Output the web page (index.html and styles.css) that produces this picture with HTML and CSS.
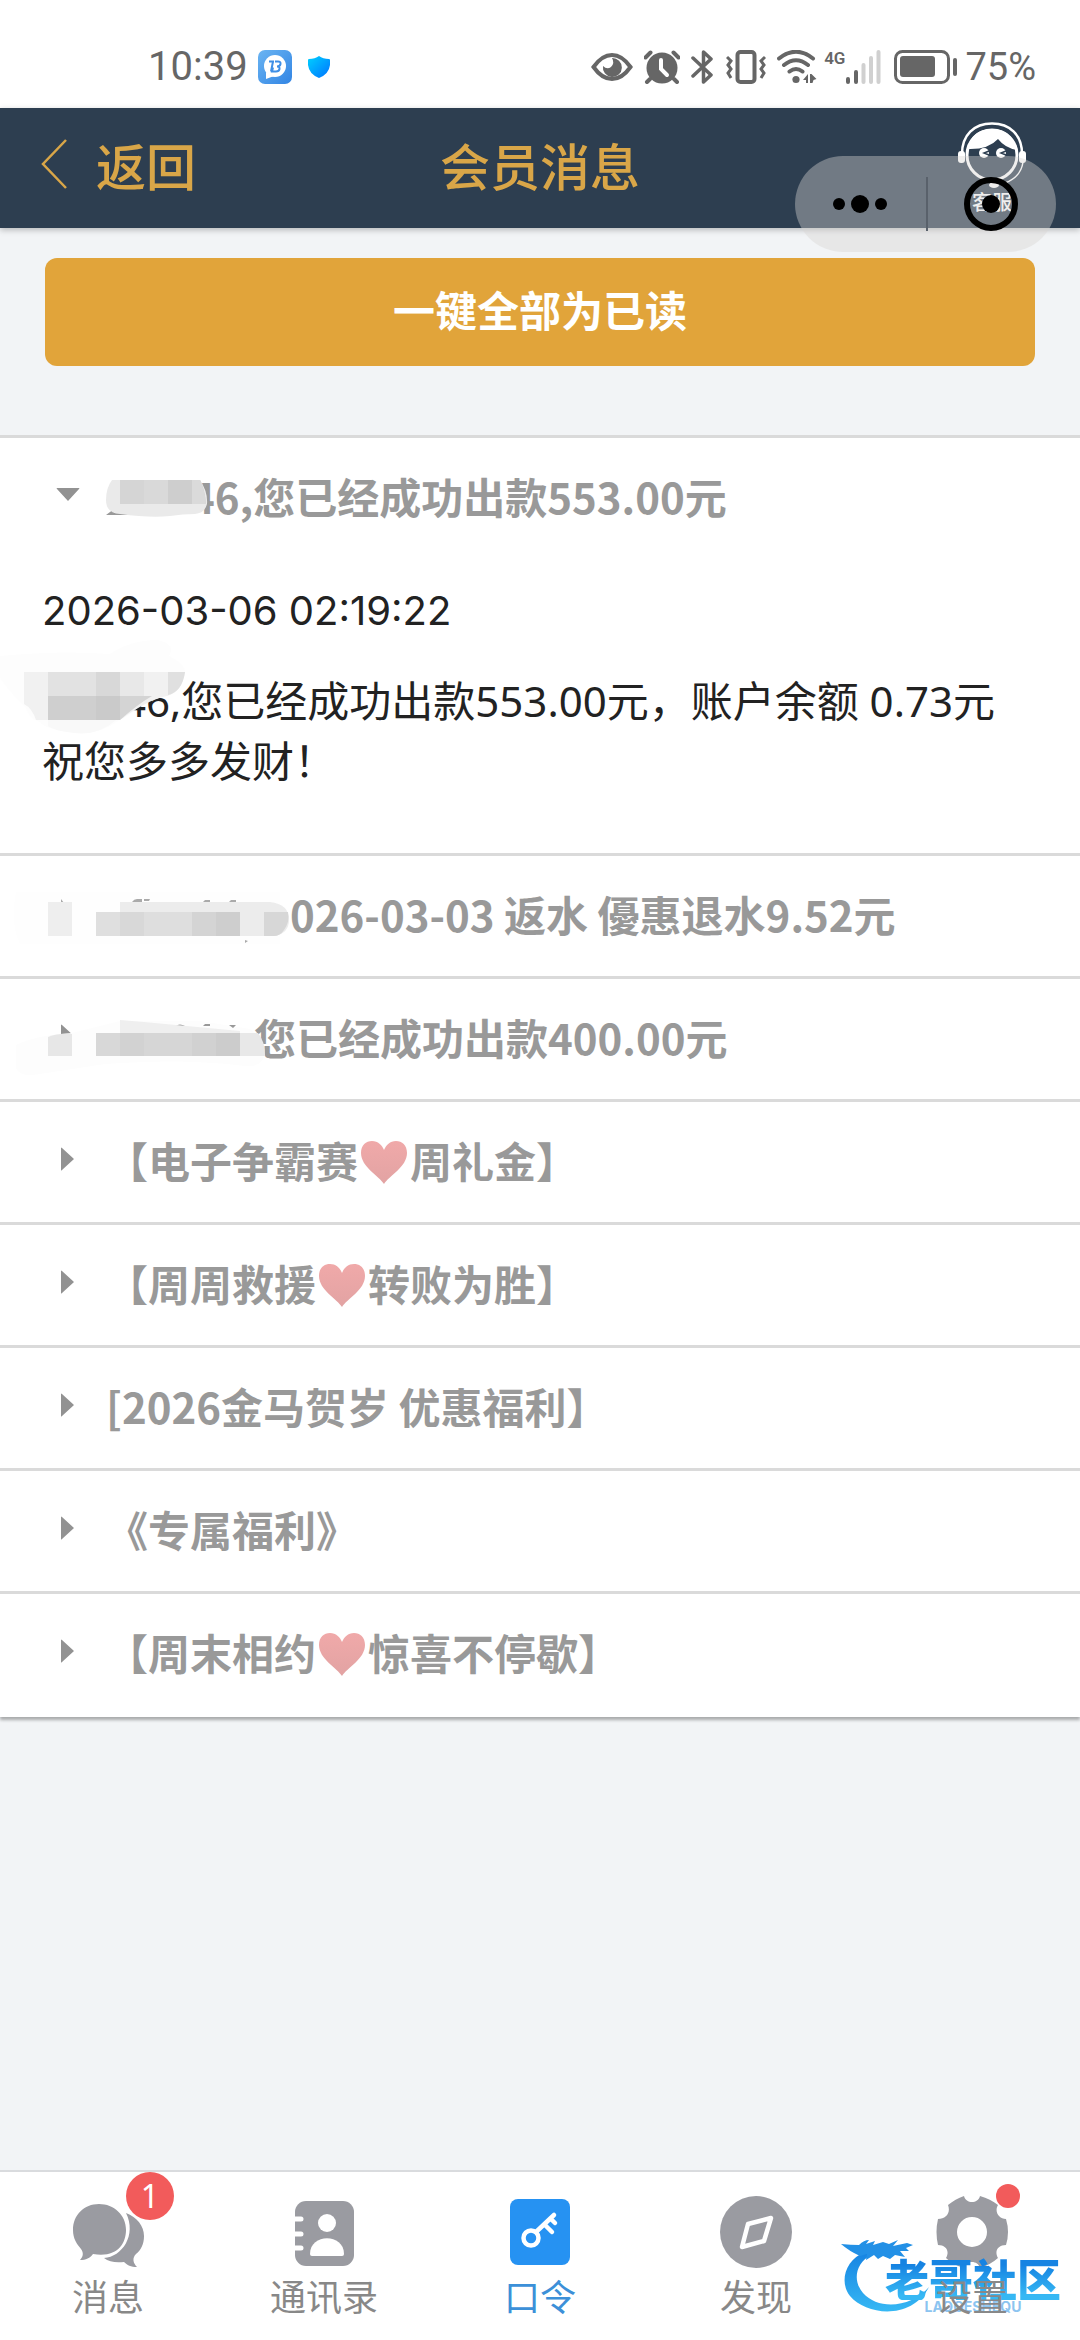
FILE: index.html
```html
<!DOCTYPE html>
<html lang="zh-CN">
<head>
<meta charset="utf-8">
<meta name="viewport" content="width=device-width, initial-scale=1">
<title>会员消息</title>
<link rel="stylesheet" href="styles.css">
</head>
<body>
<svg class="defs" aria-hidden="true">
  <defs>
    <linearGradient id="heartFill" x1="0" y1="0" x2="0" y2="1"><stop offset="0" stop-color="#f0a9a9"/><stop offset="1" stop-color="#e2a3a3"/></linearGradient>
    <linearGradient id="appFill" x1="0" y1="0" x2="1" y2="1"><stop offset="0" stop-color="#6ab4f2"/><stop offset="1" stop-color="#3285e4"/></linearGradient>
    <linearGradient id="shieldFill" x1="0" y1="0" x2="1" y2="1"><stop offset="0" stop-color="#00d2ff"/><stop offset="1" stop-color="#0072ff"/></linearGradient>
    <linearGradient id="dragonFill" x1="0" y1="0" x2="0" y2="1"><stop offset="0" stop-color="#1683e2"/><stop offset="1" stop-color="#36b8f4"/></linearGradient>
    <symbol id="heart" viewBox="0 0 52 48"><path d="M26 46C21 38 3 29 3 15 3 7 8 3 14 3c6 0 10 4 12 9 2-5 6-9 12-9 6 0 11 4 11 12 0 14-18 23-23 31z" fill="url(#heartFill)"/></symbol>
    <symbol id="arrow" viewBox="0 0 24 24"><path d="M5 1v22q0 1 1 0L18 12 6 1q-1-1-1 0z" fill="#929292"/></symbol>
  </defs>
</svg>

<div class="status">
  <div class="status-left">
    <span class="clock">10:39</span>
    <svg class="app-icon" width="34" height="34" viewBox="0 0 34 34"><rect width="34" height="34" rx="7" fill="url(#appFill)"/><circle cx="17" cy="16" r="11" fill="#fff"/><path d="M8 22l0 7 8-3z" fill="#fff"/><path d="M11 11.500h5M15 11.500l-2 10M17 11.500h3q3 0 2.500 2.500t-3.500 2.500q3 0 2.500 2.500t-3.500 2.500h-4l1-4" fill="none" stroke="#3f8fe6" stroke-width="2"/></svg>
    <svg width="22" height="22" viewBox="0 0 22 22"><path d="M11 0Q15 3 21 3q2 0 1 6-1 9-11 13Q1 18 0 9-1 3 1 3 7 3 11 0z" fill="url(#shieldFill)"/></svg>
  </div>
  <div class="status-right">
    <svg width="42" height="34" viewBox="0 0 42 34"><path d="M2.500 17Q11 5 21 5t18.500 12Q31 29 21 29T2.500 17z" fill="none" stroke="#666" stroke-width="4"/><path d="M21 8a9.500 9.500 0 1 1-9 8q4 4 8 1 4-4 1-9z" fill="#666"/></svg>
    <svg width="36" height="34" viewBox="0 0 36 34"><circle cx="18" cy="18" r="15.500" fill="#666"/><path d="M1.500 7.500l5-5M34.500 7.500l-5-5M6 29l-3 3M30 29l3 3" stroke="#666" stroke-width="4" stroke-linecap="round"/><path d="M17 10v9l6 6" fill="none" stroke="#fff" stroke-width="4" stroke-linecap="round"/></svg>
    <svg width="24" height="36" viewBox="0 0 24 36"><path d="M2 9l18 17-7.500 7V3L20 10 2 27" fill="none" stroke="#666" stroke-width="3.500" stroke-linejoin="round" stroke-linecap="round"/></svg>
    <svg width="40" height="34" viewBox="0 0 40 34"><rect x="11.500" y="2" width="17" height="30" rx="3" fill="none" stroke="#666" stroke-width="4"/><path d="M1 7l4 4-3 4 3 4-3 4 3 5M39 7l-4 4 3 4-3 4 3 4-3 5" fill="none" stroke="#666" stroke-width="3"/></svg>
    <svg width="40" height="34" viewBox="0 0 40 34"><path d="M2 8.500Q19-5 36 8.500M7 15q12-9.500 24 0M12.500 21.500q6.500-5 13 0" fill="none" stroke="#666" stroke-width="4" stroke-linecap="round"/><circle cx="19" cy="29.500" r="3.600" fill="#666"/><path d="M26 30l5-6v9h-2v-3zM33 24h1.500l5 5-3 1-1 3H33z" fill="#666"/></svg>
    <span class="cell"><span class="cell-type">4G</span><svg width="36" height="34" viewBox="0 0 36 34"><g stroke-width="4" stroke-linecap="round"><path d="M3 29v3M11 22v10" stroke="#666"/><path d="M18.500 15v17M26 8v24M33.500 2v30" stroke="#d0d0d0"/></g></svg></span>
    <svg width="64" height="34" viewBox="0 0 64 34"><rect x="1.500" y="1.500" width="53" height="31" rx="7" fill="none" stroke="#666" stroke-width="3"/><rect x="6" y="6" width="35" height="21" rx="3" fill="#666"/><rect x="59" y="8" width="4" height="18" rx="2" fill="#666"/></svg>
    <span class="percent">75%</span>
  </div>
</div>

<header class="header">
  <a class="back" href="#back"><svg width="28" height="52" viewBox="0 0 28 52"><path d="M25 2L2 26l23 24" fill="none" stroke="#d9a648" stroke-width="2.500"/></svg>返回</a>
  <h1 class="title">会员消息</h1>
  <a class="service" href="#service">
    <svg width="68" height="68" viewBox="0 0 68 68"><path d="M4 33C4 14 16 2.500 34 2.500S64 14 64 33" fill="none" stroke="#fff" stroke-width="2.500"/><circle cx="34" cy="34" r="25" fill="none" stroke="#fff" stroke-width="3"/><path d="M9 28Q14 8 34 8t25 21Q47 27 40 18q-10 11-31 10z" fill="#fff"/><rect x="0" y="30" width="7" height="12" rx="3" fill="#fff"/><rect x="61" y="30" width="7" height="12" rx="3" fill="#fff"/><circle cx="26" cy="32" r="5" fill="#fff"/><circle cx="43" cy="32" r="5" fill="#fff"/><path d="M31 30l-5 2 5 2M48 30l-5 2 5 2" fill="none" stroke="#2d3e50" stroke-width="1.500"/><path d="M65 41Q63 56 47 62" fill="none" stroke="#fff" stroke-width="1.500"/><ellipse cx="36" cy="64" rx="5" ry="3" fill="#fff"/></svg>
    <span>客服</span>
  </a>
  <div class="capsule">
    <button type="button" aria-label="更多"><svg width="56" height="20" viewBox="0 0 56 20"><circle cx="7" cy="10" r="6"/><circle cx="28" cy="10" r="9"/><circle cx="49" cy="10" r="6"/></svg></button>
    <button type="button" aria-label="关闭"><svg width="54" height="54" viewBox="0 0 54 54"><circle cx="27" cy="27" r="24" fill="none" stroke="#000" stroke-width="6"/><circle cx="27" cy="27" r="9"/></svg></button>
  </div>
</header>

<main class="main">
  <button class="read-all" type="button">一键全部为已读</button>

  <div class="messages">
    <details class="message" open>
      <summary><svg class="arrow open" width="24" height="24"><use href="#arrow"/></svg><span><i class="gap gap-a"></i>46,您已经成功出款553.00元</span>
        <svg class="mosaic" width="280" height="120" viewBox="0 0 280 120"><path d="M106 77l8-6v4h14v2z" fill="#999"/><path d="M112 42h88q8 12 7 24-2 9-12 10-12 0-25 2-20 2-50-2-14-1-14-14 0-12 6-20z" fill="#eaeaea"/><path d="M120 42h24v24h-24z" fill="#d5d5d5"/><path d="M144 42h24v24h-24z" fill="#d9d9d9"/><path d="M168 42h32q5 10 6 24h-38z" fill="#cecece"/><path d="M192 42h8q5 10 6 24h-14z" fill="#dadada"/></svg>
      </summary>
      <div class="body">
        <time>2026-03-06 02:19:22</time>
        <p><i class="gap gap-b"></i>46,您已经成功出款553.00元，账户余额 <span>0.73元</span><br>祝您多多发财！</p>
        <svg class="mosaic" width="280" height="200" viewBox="0 0 280 200"><path d="M0 98q60-6 110-2 20-14 48-14 18 4 11 16 16 8 16 17-5 18-18 23-18 3-30 12-10 10-18 12-20 16-45 12-28-2-34-10-10-2-14-14Q10 134 0 120z" fill="#fdfdfd"/><path d="M24 114h161q-3 20-18 24-18 3-47 24H36q-4-12-12-16z" fill="#f1f1f1"/><path d="M48 114h48v24H48z" fill="#e2e2e2"/><path d="M96 114h24v24H96z" fill="#d8d8d8"/><path d="M120 114h24v24h-24z" fill="#e8e8e8"/><path d="M168 114h17q-3 20-17 23z" fill="#e0e0e0"/><path d="M48 138h48v24H48z" fill="#cfcfcf"/><path d="M96 138h24v24H96z" fill="#cacaca"/><path d="M120 138h32q-14 8-32 24z" fill="#d4d4d4"/><path d="M48 162h68q-18 16-42 13-20-2-26-7z" fill="#f9f9f9"/></svg>
      </div>
    </details>
    <details class="message">
      <summary><svg class="arrow" width="24" height="24"><use href="#arrow"/></svg><span><i class="gap gap-c"></i>026-03-03 返水 優惠退水9.52元</span>
        <svg class="mosaic" width="320" height="120" viewBox="0 0 320 120"><path d="M16 36h264v52H20q-10-20-4-52z" fill="#fefefe"/><path d="M61 47v-4l3 4zM132 46q2-3 5-3h5v3zM144 43h6l-1 2h-5zM203 46l2-2h5v2zM229 46l2-2h5v2zM245 84l3 1-3 2z" fill="#aaa"/><path d="M48 46h24v34H48z" fill="#eeeeee"/><path d="M96 56h24v24H96z" fill="#dfdfdf"/><path d="M120 46h150q19 2 19 18 0 13-14 16H120z" fill="#ececec"/><path d="M120 56h24v24h-24z" fill="#d8d8d8"/><path d="M144 56h48v24h-48z" fill="#dedede"/><path d="M192 56h24v24h-24z" fill="#d4d4d4"/><path d="M216 56h24v24h-24z" fill="#cecece"/><path d="M264 56h24q2 10-4 18-4 6-10 6h-10z" fill="#d7d7d7"/></svg>
      </summary>
    </details>
    <details class="message">
      <summary><svg class="arrow" width="24" height="24"><use href="#arrow"/></svg><span><i class="gap gap-d"></i>您已经成功出款400.00元</span>
        <svg class="mosaic" width="320" height="120" viewBox="0 0 320 120"><path d="M16 66q20-10 56-12l48-12h80l50 8q18 14 13 30-4 8-18 7-60-8-140-2l-65 10q-20 4-24-6z" fill="#fdfdfd"/><path d="M175 47q5-3 10 0zM203 47l2-2h5v2zM229 46h7l-3 3z" fill="#999"/><path d="M48 58q10-4 24-3v22H48z" fill="#e7e7e7"/><path d="M96 54h24v23H96z" fill="#d8d8d8"/><path d="M120 41l24 2 96 9v25H120z" fill="#efefef"/><path d="M120 54h24v23h-24z" fill="#d2d2d2"/><path d="M144 54h48v23h-48z" fill="#d6d6d6"/><path d="M192 54h24v23h-24z" fill="#d1d1d1"/><path d="M216 54h24v23h-24z" fill="#cccccc"/><path d="M240 54h18q7 8 7 23h-25z" fill="#e8e8e8"/></svg>
      </summary>
    </details>
    <details class="message"><summary><svg class="arrow" width="24" height="24"><use href="#arrow"/></svg><span>【电子争霸赛<svg class="heart" width="52" height="48"><use href="#heart"/></svg>周礼金】</span></summary></details>
    <details class="message"><summary><svg class="arrow" width="24" height="24"><use href="#arrow"/></svg><span>【周周救援<svg class="heart" width="52" height="48"><use href="#heart"/></svg>转败为胜】</span></summary></details>
    <details class="message"><summary><svg class="arrow" width="24" height="24"><use href="#arrow"/></svg><span>[2026金马贺岁 优惠福利】</span></summary></details>
    <details class="message"><summary><svg class="arrow" width="24" height="24"><use href="#arrow"/></svg><span>《专属福利》</span></summary></details>
    <details class="message"><summary><svg class="arrow" width="24" height="24"><use href="#arrow"/></svg><span>【周末相约<svg class="heart" width="52" height="48"><use href="#heart"/></svg>惊喜不停歇】</span></summary></details>
  </div>
</main>

<nav class="tabs">
  <a class="tab" href="#messages">
    <span class="icon"><svg width="72" height="72" viewBox="0 0 72 72"><path d="M27 8C12 8 1 19 1 34c0 9 4 14 8 19 3 4 2 8-1 11 6 0 10-2 13-6 24 4 33-10 33-24C54 19 42 8 27 8z" fill="#9a9ba1"/><path d="M54 17c11 4 18 13 18 23 0 8-3 14-8 18-4 4-3 9 1 13-6 0-10-2-13-5-8 1-15 0-20-4 18-1 33-23 22-45z" fill="#9a9ba1"/></svg><b class="badge">1</b></span>
    <span class="label">消息</span>
  </a>
  <a class="tab" href="#contacts">
    <span class="icon"><svg width="72" height="72" viewBox="0 0 72 72"><rect x="7" y="5" width="59" height="65" rx="11" fill="#9a9ba1"/><path d="M6 23h7M6 38h7M6 52h7" stroke="#fff" stroke-width="5" stroke-linecap="round"/><ellipse cx="39" cy="27" rx="9" ry="9" fill="#fff"/><path d="M22 58C22 37 56 37 56 58q0 2-2 2H24q-2 0-2-2z" fill="#fff"/></svg></span>
    <span class="label">通讯录</span>
  </a>
  <a class="tab active" href="#token" aria-current="page">
    <span class="icon"><svg width="72" height="72" viewBox="0 0 72 72"><rect x="6" y="3" width="60" height="66" rx="8" fill="#2692f2"/><circle cx="27" cy="42" r="7.500" fill="none" stroke="#fff" stroke-width="4.500"/><path d="M32 36l18-17M41 29l7 7M47 23l4 4" fill="none" stroke="#fff" stroke-width="4.500" stroke-linecap="round"/></svg></span>
    <span class="label">口令</span>
  </a>
  <a class="tab" href="#discover">
    <span class="icon"><svg width="72" height="72" viewBox="0 0 72 72"><circle cx="36" cy="36" r="36" fill="#9a9ba1"/><path d="M28 28l23-6-7 23-22 6z" fill="none" stroke="#fff" stroke-width="4.500" stroke-linejoin="round"/></svg></span>
    <span class="label">发现</span>
  </a>
  <a class="tab" href="#settings">
    <span class="icon"><svg width="72" height="72" viewBox="0 0 72 72"><path fill-rule="evenodd" d="M28 0c2 8 14 8 16 0 7 2 13 5 18 9-4 7 1 14 8 14q4 13 0 26c-8 0-12 6-8 13q-8 7-18 10c-2-8-14-8-16 0q-11-3-18-10c4-7 0-13-8-13q-3-13 0-26c8 0 13-6 10-14 5-4 10-7 16-9zM36 21a15 15 0 1 0 0 30 15 15 0 0 0 0-30z" fill="#9a9ba1"/></svg><b class="dot"></b></span>
    <span class="label">设置</span>
    <span class="watermark" aria-hidden="true">
      <svg width="90" height="80" viewBox="0 0 90 80"><path d="M24 14C4 22-2 44 9 58c17 20 62 24 79-9-17 20-50 24-66 6C11 42 15 25 30 17z" fill="url(#dragonFill)"/><path d="M0 6q10 1 18 1 5-5 10-5l-3 4 9-3-2 4 10-3 6 2 9-4-5 6 14-3 6 2-7 3 3 3-9 0 5 6-10-2-5 4-7-3-5 3-4-4-8 5 1-6-7 2Q8 13 0 6z" fill="#2290e6"/></svg>
      <span class="brand"><strong>老哥社区</strong><small>LAOGESHEQU</small></span>
    </span>
  </a>
</nav>
</body>
</html>
```
FILE: styles.css
```css
* { box-sizing: border-box; }

body {
  margin: 0;
  min-height: 100vh;
  display: flex;
  flex-direction: column;
  background: #f2f4f6;
  color: #222;
  font-family: "Noto Sans CJK SC", sans-serif;
  font-size: 42px;
  line-height: 60px;
}

svg { display: block; flex: none; }
a { color: inherit; text-decoration: none; }
button { padding: 0; border: 0; background: none; font: inherit; }
.defs { position: absolute; width: 0; height: 0; }

/* Status bar */
.status {
  height: 108px;
  padding: 26px 44px 0 148px;
  display: flex;
  justify-content: space-between;
  align-items: center;
  background: #fff;
  color: #666;
  font-family: Roboto, sans-serif;
  line-height: 48px;
}
.status-left, .status-right { display: flex; align-items: center; }
.clock { font-size: 40px; }
.app-icon { margin: 0 16px 0 10px; }
.status-right { gap: 11px; }
.cell { display: flex; margin: 0 2px 0 -4px; }
.cell-type { font-size: 17px; line-height: 16px; font-weight: 600; }
.percent { margin-left: -4px; font-size: 38px; }

/* Header */
.header {
  position: relative;
  z-index: 1;
  height: 120px;
  padding: 0 54px 0 41px;
  display: grid;
  grid-template-columns: 1fr auto 1fr;
  align-items: center;
  background: #2d3e50;
  color: #d9a648;
  font-size: 50px;
  font-weight: 500;
  box-shadow: 0 2px 6px rgba(0, 0, 0, .25);
}
.back { display: flex; align-items: center; gap: 27px; padding-bottom: 8px; }
.title { margin: 0; padding: 0 0 8px 13px; font-size: 50px; font-weight: 500; }
.service {
  justify-self: end;
  display: flex;
  flex-direction: column;
  align-items: center;
  color: #fff;
  font-size: 20px;
  line-height: 26px;
}
.capsule {
  position: absolute;
  top: 48px;
  right: 24px;
  width: 261px;
  height: 96px;
  display: grid;
  grid-template-columns: 1fr 1fr;
  border-radius: 48px;
  background: rgba(215, 213, 210, .4);
}
.capsule button { display: grid; place-items: center; }
.capsule button + button {
  background: linear-gradient(#59616b, #59616b) left center / 2px 54px no-repeat;
}

/* Message list */
.main { flex: 1; padding-top: 30px; }
.read-all {
  display: block;
  width: calc(100% - 90px);
  height: 108px;
  margin: 0 45px 69px;
  padding-bottom: 6px;
  border-radius: 12px;
  background: #e1a43a;
  color: #fff;
  font-weight: 700;
}
.messages {
  padding-bottom: 3px;
  background: #fff;
  box-shadow: 0 3px 3px rgba(0, 0, 0, .3);
}
.message { border-top: 3px solid #dadada; }
summary {
  position: relative;
  height: 120px;
  padding: 0 56px 4px;
  display: flex;
  align-items: center;
  gap: 26px;
  color: #999;
  font-weight: 700;
  white-space: nowrap;
  list-style: none;
}
.arrow { margin-bottom: 2px; }
.arrow.open { transform: rotate(90deg); }
.heart { display: inline-block; vertical-align: -8px; }
.gap { display: inline-block; }
.gap-a { width: 84px; }
.gap-b { width: 80px; }
.gap-c { width: 184px; }
.gap-d { width: 148px; }
.mosaic { position: absolute; top: 0; left: 0; }
.body {
  position: relative;
  padding: 23px 42px 62px;
  font-family: "Noto Sans", "Noto Sans CJK SC", sans-serif;
}
.body time { display: block; margin-bottom: 30px; font-family: Inter, sans-serif; font-size: 40px; }
.body p { margin: 0; }

/* Tab bar */
.tabs {
  display: grid;
  grid-template-columns: repeat(5, 1fr);
  border-top: 2px solid #d9dbde;
  background: #fff;
}
.tab {
  position: relative;
  padding: 24px 0 22px;
  display: flex;
  flex-direction: column;
  align-items: center;
  gap: 4px;
  color: #888;
}
.tab.active { color: #3c90d8; }
.icon { position: relative; }
.label { position: relative; z-index: 1; font-size: 36px; line-height: 46px; }
.badge, .dot { position: absolute; border-radius: 50%; background: #f25b5b; }
.badge {
  top: -24px;
  right: -30px;
  width: 48px;
  height: 48px;
  color: #fff;
  font: 400 32px/48px "Noto Sans", sans-serif;
  text-align: center;
}
.dot { top: -12px; right: -12px; width: 24px; height: 24px; }
.watermark {
  position: absolute;
  right: 19px;
  bottom: 22px;
  display: flex;
  white-space: nowrap;
}
.brand {
  margin: 18px 0 0 -46px;
  display: flex;
  flex-direction: column;
  align-items: center;
}
.brand strong {
  background: linear-gradient(#1683e2 20%, #36b8f4 90%);
  background-clip: text;
  color: transparent;
  font-size: 44px;
  font-weight: 900;
  line-height: 44px;
}
.brand small { color: #8cc4f0; font: 700 14px/14px Inter, sans-serif; }
```
